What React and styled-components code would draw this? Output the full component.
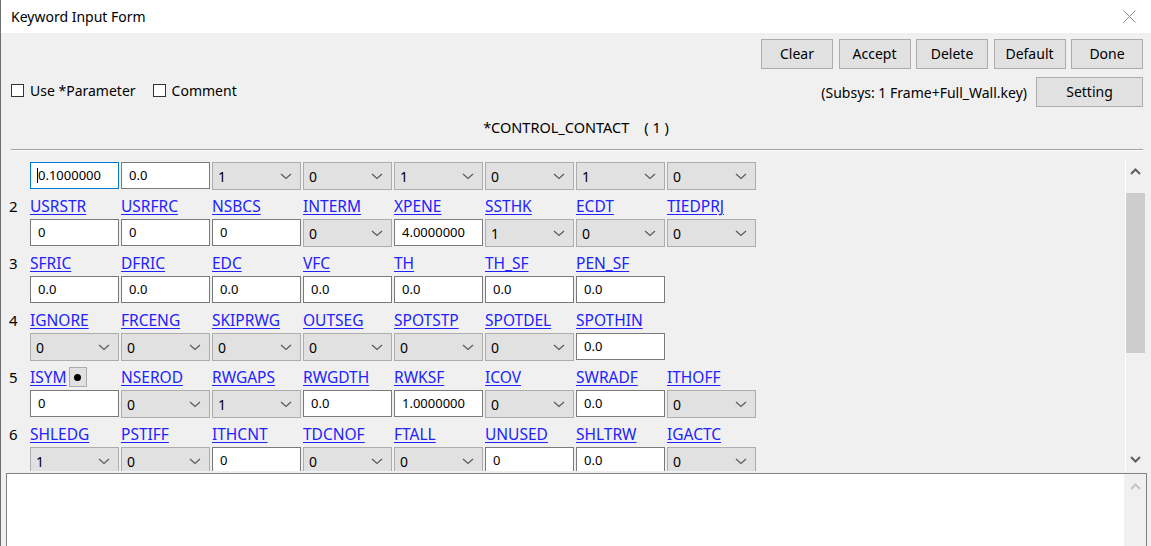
import React from 'react';
import styled, { createGlobalStyle } from 'styled-components';

const GlobalStyle = createGlobalStyle`
  html, body {
    margin: 0;
    padding: 0;
    background: #f0f0f0;
  }
  body {
    font-family: "Noto Sans", "Open Sans", sans-serif;
    color: #000;
    overflow: hidden;
  }
`;

// card 1 is scrolled past its label line in the reference
const rows = [
  {
    n: 1,
    scrolled: true,
    cells: [
      { label: 'SLSFAC', type: 'input', value: '0.1000000', focus: true },
      { label: 'RWPNAL', type: 'input', value: '0.0' },
      { label: 'ISLCHK', type: 'select', value: '1' },
      { label: 'SHLTHK', type: 'select', value: '0' },
      { label: 'PENOPT', type: 'select', value: '1' },
      { label: 'THKCHG', type: 'select', value: '0' },
      { label: 'ORIEN', type: 'select', value: '1' },
      { label: 'ENMASS', type: 'select', value: '0' },
    ],
  },
  {
    n: 2,
    cells: [
      { label: 'USRSTR', type: 'input', value: '0' },
      { label: 'USRFRC', type: 'input', value: '0' },
      { label: 'NSBCS', type: 'input', value: '0' },
      { label: 'INTERM', type: 'select', value: '0' },
      { label: 'XPENE', type: 'input', value: '4.0000000' },
      { label: 'SSTHK', type: 'select', value: '1' },
      { label: 'ECDT', type: 'select', value: '0' },
      { label: 'TIEDPRJ', type: 'select', value: '0' },
    ],
  },
  {
    n: 3,
    cells: [
      { label: 'SFRIC', type: 'input', value: '0.0' },
      { label: 'DFRIC', type: 'input', value: '0.0' },
      { label: 'EDC', type: 'input', value: '0.0' },
      { label: 'VFC', type: 'input', value: '0.0' },
      { label: 'TH', type: 'input', value: '0.0' },
      { label: 'TH_SF', type: 'input', value: '0.0' },
      { label: 'PEN_SF', type: 'input', value: '0.0' },
    ],
  },
  {
    n: 4,
    cells: [
      { label: 'IGNORE', type: 'select', value: '0' },
      { label: 'FRCENG', type: 'select', value: '0' },
      { label: 'SKIPRWG', type: 'select', value: '0' },
      { label: 'OUTSEG', type: 'select', value: '0' },
      { label: 'SPOTSTP', type: 'select', value: '0' },
      { label: 'SPOTDEL', type: 'select', value: '0' },
      { label: 'SPOTHIN', type: 'input', value: '0.0' },
    ],
  },
  {
    n: 5,
    cells: [
      { label: 'ISYM', type: 'input', value: '0', dot: true },
      { label: 'NSEROD', type: 'select', value: '0' },
      { label: 'RWGAPS', type: 'select', value: '1' },
      { label: 'RWGDTH', type: 'input', value: '0.0' },
      { label: 'RWKSF', type: 'input', value: '1.0000000' },
      { label: 'ICOV', type: 'select', value: '0' },
      { label: 'SWRADF', type: 'input', value: '0.0' },
      { label: 'ITHOFF', type: 'select', value: '0' },
    ],
  },
  {
    n: 6,
    cells: [
      { label: 'SHLEDG', type: 'select', value: '1' },
      { label: 'PSTIFF', type: 'select', value: '0' },
      { label: 'ITHCNT', type: 'input', value: '0' },
      { label: 'TDCNOF', type: 'select', value: '0' },
      { label: 'FTALL', type: 'select', value: '0' },
      { label: 'UNUSED', type: 'input', value: '0' },
      { label: 'SHLTRW', type: 'input', value: '0.0' },
      { label: 'IGACTC', type: 'select', value: '0' },
    ],
  },
];

const Window = styled.div`
  width: 1151px;
  height: 546px;
  box-sizing: border-box;
  border-left: 1px solid #6e6e6e;
  display: flex;
  flex-direction: column;
  overflow: hidden;
  background: #f0f0f0;
`;

const TitleBar = styled.div`
  height: 33px;
  flex: none;
  background: #fff;
  display: flex;
  align-items: center;
  justify-content: space-between;
  padding: 0 15px 0 10px;
  font-size: 14px;
`;

const TopBar = styled.div`
  display: flex;
  justify-content: flex-end;
  gap: 5.5px;
  padding: 6px 8px 0 0;
`;

const Button = styled.button`
  width: ${p => p.$width || 72}px;
  height: 30px;
  box-sizing: border-box;
  border: 1px solid #adadad;
  background: #e1e1e1;
  font-family: "Noto Sans", sans-serif;
  font-size: 14px;
  color: #000;
  padding: 0 0 2px;
  margin: 0;
`;

const OptionBar = styled.div`
  display: flex;
  align-items: center;
  justify-content: space-between;
  margin-top: 8px;
  padding: 0 8px 0 10px;
`;

const CheckGroup = styled.div`
  display: flex;
  align-items: center;
  gap: 17px;
  margin-top: -3px;
`;

const Check = styled.label`
  display: flex;
  align-items: center;
  gap: 6px;
  font-size: 14px;
`;

const Box = styled.span`
  width: 13px;
  height: 13px;
  box-sizing: border-box;
  border: 1px solid #333;
  background: #fff;
`;

const SubsysGroup = styled.div`
  display: flex;
  align-items: center;
  gap: 9px;
  font-size: 14px;
`;

const Heading = styled.div`
  margin-top: 10px;
  line-height: 20px;
  text-align: center;
  font-size: 14.5px;
  white-space: pre;
`;

const Separator = styled.div`
  margin: 12px 8px 0 10px;
  border-top: 1px solid #a0a0a0;
  border-bottom: 1px solid #fff;
`;

const ScrollSection = styled.div`
  display: flex;
  height: 314px;
  margin-top: 6px;
  flex: none;
`;

const Viewport = styled.div`
  flex: 1;
  overflow: hidden;
  padding: 5px 0 0 8px;
`;

const Card = styled.div`
  display: flex;
  flex-direction: column;
`;

const Line = styled.div`
  display: grid;
  grid-template-columns: 19px repeat(8, 89px);
  column-gap: 2px;
  height: ${p => p.$h}px;
  align-items: ${p => p.$align || 'start'};
`;

const RowNum = styled.span`
  font-size: 15px;
  line-height: 20px;
  padding-bottom: 3px;
`;

const LabelCell = styled.div`
  display: flex;
  align-items: center;
  gap: 2px;
  padding-bottom: 3px;
`;

const FieldLabel = styled.a`
  font-size: 15.5px;
  line-height: 20px;
  color: #2222ff;
  text-decoration: underline;
  text-underline-offset: 2px;
  cursor: pointer;
`;

const DotButton = styled.span`
  width: 18px;
  height: 20px;
  box-sizing: border-box;
  border: 1px solid #adadad;
  background: #e1e1e1;
  display: flex;
  align-items: center;
  justify-content: center;
  &::after {
    content: '';
    width: 7px;
    height: 7px;
    border-radius: 50%;
    background: #000;
  }
`;

const InputWrap = styled.div`
  position: relative;
  width: 89px;
  height: 27px;
`;

const TextField = styled.input`
  width: 89px;
  height: 27px;
  box-sizing: border-box;
  border: 1px solid ${p => (p.$focus ? '#0078d7' : '#7a7a7a')};
  background: #fff;
  font-family: "Noto Sans", sans-serif;
  font-size: 13px;
  color: #000;
  padding: 0 0 2px 7px;
  margin: 0;
  outline: none;
`;

const Caret = styled.span`
  position: absolute;
  left: 7px;
  top: 6px;
  width: 1px;
  height: 15px;
  background: #000;
`;

const Combo = styled.div`
  width: 89px;
  height: 28px;
  box-sizing: border-box;
  border: 1px solid #adadad;
  background: #e1e1e1;
  display: flex;
  align-items: center;
  justify-content: space-between;
  padding: 1px 8px 0 5px;
  font-size: 14px;
`;

const Scrollbar = styled.div`
  width: 19px;
  margin: 2px 6px 0 0;
  border-left: 1px solid #fff;
  display: flex;
  flex-direction: column;
  background: #f0f0f0;
`;

const Arrow = styled.div`
  height: 24px;
  flex: none;
  display: flex;
  align-items: center;
  justify-content: center;
`;

const Track = styled.div`
  flex: 1;
  display: flex;
  flex-direction: column;
`;

const Thumb = styled.div`
  height: 160px;
  background: #cdcdcd;
`;

const TextBox = styled.div`
  flex: 1;
  margin: 2px 4px 0 5px;
  border: 1px solid #828282;
  border-bottom: none;
  background: #fff;
  display: flex;
  justify-content: flex-end;
`;

const TextBoxBar = styled.div`
  width: 22px;
  background: #f0f0f0;
  display: flex;
  flex-direction: column;
`;

const Chevron = ({ up, color = '#606060', w = 9, sw = 2 }) => (
  <svg width={w + 2} height={7} viewBox={`0 0 ${w + 2} 7`}>
    <polyline
      points={up ? `1,6 ${w / 2 + 1},1.5 ${w + 1},6` : `1,1 ${w / 2 + 1},5.5 ${w + 1},1`}
      fill="none"
      stroke={color}
      strokeWidth={sw}
    />
  </svg>
);

const Field = ({ cell }) => {
  if (cell.type === 'select') {
    return (
      <Combo>
        <span>{cell.value}</span>
        <Chevron color="#5a5a5a" w={10} sw={1.2} />
      </Combo>
    );
  }
  return (
    <InputWrap>
      <TextField readOnly defaultValue={cell.value} $focus={cell.focus} />
      {cell.focus && <Caret />}
    </InputWrap>
  );
};

const KeywordCard = ({ row }) => (
  <Card>
    {!row.scrolled && (
      <Line $h={29} $align="end">
        <RowNum>{row.n}</RowNum>
        {row.cells.map(cell => (
          <LabelCell key={cell.label}>
            <FieldLabel>{cell.label}</FieldLabel>
            {cell.dot && <DotButton />}
          </LabelCell>
        ))}
      </Line>
    )}
    <Line $h={28}>
      <span />
      {row.cells.map(cell => (
        <Field key={cell.label} cell={cell} />
      ))}
    </Line>
  </Card>
);

const App = () => (
  <>
    <GlobalStyle />
    <Window>
      <TitleBar>
        <span>Keyword Input Form</span>
        <svg width="13" height="13" viewBox="0 0 13 13">
          <path d="M0.5 0.5 L12.5 12.5 M12.5 0.5 L0.5 12.5" stroke="#8a8a8a" strokeWidth="1" />
        </svg>
      </TitleBar>

      <TopBar>
        {['Clear', 'Accept', 'Delete', 'Default', 'Done'].map(b => (
          <Button key={b}>{b}</Button>
        ))}
      </TopBar>

      <OptionBar>
        <CheckGroup>
          <Check>
            <Box />
            Use *Parameter
          </Check>
          <Check>
            <Box />
            Comment
          </Check>
        </CheckGroup>
        <SubsysGroup>
          <span>(Subsys: 1 Frame+Full_Wall.key)</span>
          <Button $width={107}>Setting</Button>
        </SubsysGroup>
      </OptionBar>

      <Heading>{'*CONTROL_CONTACT    ( 1 )'}</Heading>
      <Separator />

      <ScrollSection>
        <Viewport>
          {rows.map(row => (
            <KeywordCard key={row.n} row={row} />
          ))}
        </Viewport>
        <Scrollbar>
          <Arrow>
            <Chevron up />
          </Arrow>
          <Track>
            <span style={{ height: 10 }} />
            <Thumb />
          </Track>
          <Arrow>
            <Chevron />
          </Arrow>
        </Scrollbar>
      </ScrollSection>

      <TextBox>
        <TextBoxBar>
          <Arrow>
            <Chevron up color="#c4c4c4" />
          </Arrow>
        </TextBoxBar>
      </TextBox>
    </Window>
  </>
);

export default App;
